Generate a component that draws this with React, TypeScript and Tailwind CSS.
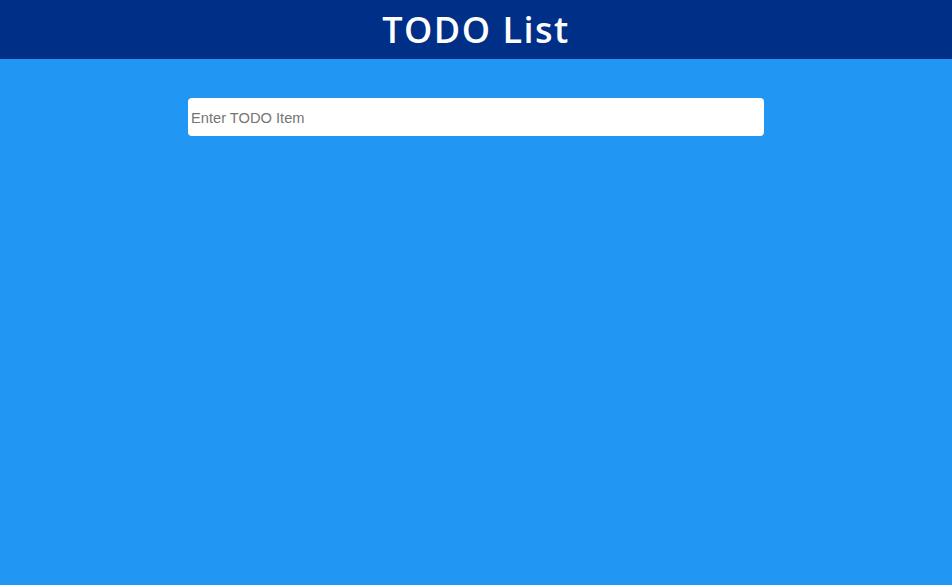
export default function App() {
  return (
    <div className="min-h-[585px] bg-[#2196f3]">
      <header className="h-[59px] bg-[#002f87] flex items-center justify-center">
        <h1 className="text-white text-[36px] font-semibold tracking-[1.5px] font-['Open_Sans',sans-serif] leading-none pt-[1px]">
          TODO List
        </h1>
      </header>
      <div className="flex justify-center pt-[39px]">
        <input
          type="text"
          placeholder="Enter TODO Item"
          className="w-[576px] h-[38px] bg-white rounded-[4px] px-[3px] pt-[1px] text-[14.67px] font-['Liberation_Sans',Arial,sans-serif] placeholder:text-[#757575] outline-none"
        />
      </div>
    </div>
  );
}
